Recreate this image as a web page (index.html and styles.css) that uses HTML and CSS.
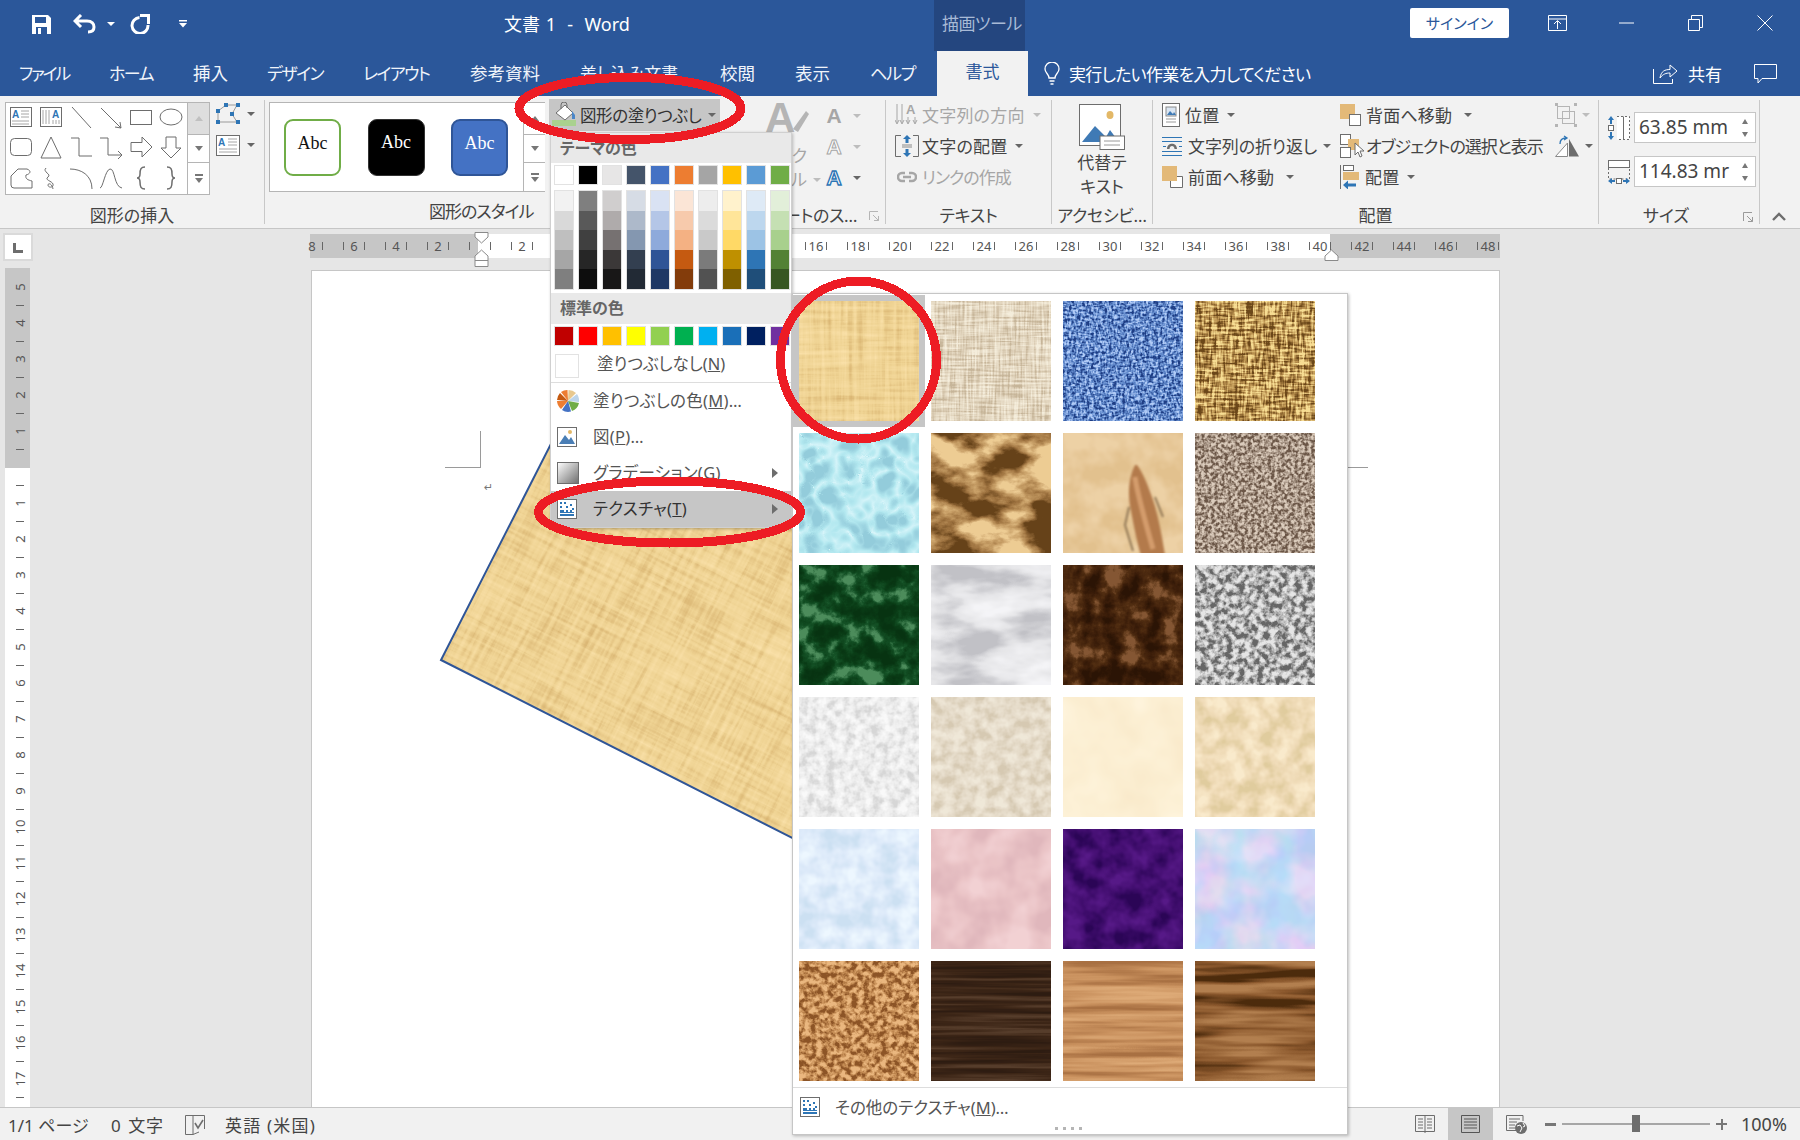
FILE: index.html
```html
<!DOCTYPE html>
<html lang="ja">
<head>
<meta charset="utf-8">
<title>文書 1 - Word</title>
<link rel="stylesheet" href="styles.css">
</head>
<body>
<svg class="defs" width="0" height="0" aria-hidden="true">
<defs>
<filter id="papyrus" x="0" y="0" width="100%" height="100%" color-interpolation-filters="sRGB"><feTurbulence type="fractalNoise" baseFrequency=".012 .22" numOctaves="3" seed="2" result="a"/><feTurbulence type="fractalNoise" baseFrequency=".22 .012" numOctaves="3" seed="5" result="b"/><feComposite in="a" in2="b" operator="arithmetic" k2=".5" k3=".5"/><feColorMatrix values="1.8 0 0 0 -.4 1.8 0 0 0 -.4 1.8 0 0 0 -.4 0 0 0 0 1"/><feComponentTransfer><feFuncR type="table" tableValues=".86 .94 .98"/><feFuncG type="table" tableValues=".72 .83 .88"/><feFuncB type="table" tableValues=".46 .58 .66"/></feComponentTransfer></filter>
<filter id="canvas" x="0" y="0" width="100%" height="100%" color-interpolation-filters="sRGB"><feTurbulence type="fractalNoise" baseFrequency=".03 .5" numOctaves="2" seed="3" result="a"/><feTurbulence type="fractalNoise" baseFrequency=".5 .03" numOctaves="2" seed="8" result="b"/><feComposite in="a" in2="b" operator="arithmetic" k2=".5" k3=".5"/><feColorMatrix values="3 0 0 0 -1 3 0 0 0 -1 3 0 0 0 -1 0 0 0 0 1"/><feComponentTransfer><feFuncR type="table" tableValues=".78 .89 .96"/><feFuncG type="table" tableValues=".71 .84 .93"/><feFuncB type="table" tableValues=".60 .75 .86"/></feComponentTransfer></filter>
<filter id="denim" x="0" y="0" width="100%" height="100%" color-interpolation-filters="sRGB"><feTurbulence type="fractalNoise" baseFrequency=".22 .45" numOctaves="2" seed="4" result="a"/><feTurbulence type="fractalNoise" baseFrequency=".45 .22" numOctaves="2" seed="9" result="b"/><feComposite in="a" in2="b" operator="arithmetic" k2=".5" k3=".5"/><feColorMatrix values="3.5 0 0 0 -1.25 3.5 0 0 0 -1.25 3.5 0 0 0 -1.25 0 0 0 0 1"/><feComponentTransfer><feFuncR type="table" tableValues=".12 .38 .70"/><feFuncG type="table" tableValues=".24 .54 .80"/><feFuncB type="table" tableValues=".52 .80 .97"/></feComponentTransfer></filter>
<filter id="weave" x="0" y="0" width="100%" height="100%" color-interpolation-filters="sRGB"><feTurbulence type="fractalNoise" baseFrequency=".06 .42" numOctaves="2" seed="6" result="a"/><feTurbulence type="fractalNoise" baseFrequency=".42 .06" numOctaves="2" seed="11" result="b"/><feComposite in="a" in2="b" operator="arithmetic" k2=".5" k3=".5"/><feColorMatrix values="4 0 0 0 -1.5 4 0 0 0 -1.5 4 0 0 0 -1.5 0 0 0 0 1"/><feComponentTransfer><feFuncR type="table" tableValues=".42 .74 .97"/><feFuncG type="table" tableValues=".28 .58 .87"/><feFuncB type="table" tableValues=".10 .32 .58"/></feComponentTransfer></filter>
<filter id="water" x="0" y="0" width="100%" height="100%" color-interpolation-filters="sRGB"><feTurbulence type="turbulence" baseFrequency=".04" numOctaves="2" seed="7"/><feColorMatrix values="2.5 0 0 0 0 2.5 0 0 0 0 2.5 0 0 0 0 0 0 0 0 1"/><feComponentTransfer><feFuncR type="table" tableValues=".84 .70 .58"/><feFuncG type="table" tableValues=".96 .91 .80"/><feFuncB type="table" tableValues=".98 .94 .86"/></feComponentTransfer></filter>
<filter id="bag" x="0" y="0" width="100%" height="100%" color-interpolation-filters="sRGB"><feTurbulence type="fractalNoise" baseFrequency=".02 .035" numOctaves="5" seed="12"/><feColorMatrix values="3.5 0 0 0 -1.25 3.5 0 0 0 -1.25 3.5 0 0 0 -1.25 0 0 0 0 1"/><feComponentTransfer><feFuncR type="table" tableValues=".40 .62 .78 .93"/><feFuncG type="table" tableValues=".26 .45 .62 .80"/><feFuncB type="table" tableValues=".10 .25 .40 .58"/></feComponentTransfer></filter>
<filter id="fossil" x="0" y="0" width="100%" height="100%" color-interpolation-filters="sRGB"><feTurbulence type="fractalNoise" baseFrequency=".04" numOctaves="3" seed="5"/><feColorMatrix values="2.5 0 0 0 -.75 2.5 0 0 0 -.75 2.5 0 0 0 -.75 0 0 0 0 1"/><feComponentTransfer><feFuncR type="table" tableValues=".89 .93"/><feFuncG type="table" tableValues=".76 .82"/><feFuncB type="table" tableValues=".56 .65"/></feComponentTransfer></filter>
<filter id="soft" x="-10%" y="-10%" width="120%" height="120%"><feGaussianBlur stdDeviation="1.2"/></filter>
<filter id="sand" x="0" y="0" width="100%" height="100%" color-interpolation-filters="sRGB"><feTurbulence type="fractalNoise" baseFrequency=".3" numOctaves="2" seed="14"/><feColorMatrix values="3 0 0 0 -1 3 0 0 0 -1 3 0 0 0 -1 0 0 0 0 1"/><feComponentTransfer><feFuncR type="table" tableValues=".42 .66 .86"/><feFuncG type="table" tableValues=".34 .59 .80"/><feFuncB type="table" tableValues=".28 .53 .74"/></feComponentTransfer></filter>
<filter id="gmarble" x="0" y="0" width="100%" height="100%" color-interpolation-filters="sRGB"><feTurbulence type="fractalNoise" baseFrequency=".05" numOctaves="5" seed="15"/><feColorMatrix values="2.4 0 0 0 -.7 2.4 0 0 0 -.7 2.4 0 0 0 -.7 0 0 0 0 1"/><feComponentTransfer><feFuncR type="table" tableValues=".03 .04 .08 .30"/><feFuncG type="table" tableValues=".20 .24 .32 .55"/><feFuncB type="table" tableValues=".07 .09 .15 .36"/></feComponentTransfer></filter>
<filter id="wmarble" x="0" y="0" width="100%" height="100%" color-interpolation-filters="sRGB"><feTurbulence type="fractalNoise" baseFrequency=".014 .035" numOctaves="4" seed="16"/><feColorMatrix values="2.2 0 0 0 -.6 2.2 0 0 0 -.6 2.2 0 0 0 -.6 0 0 0 0 1"/><feComponentTransfer><feFuncR type="table" tableValues=".76 .90 .96"/><feFuncG type="table" tableValues=".76 .90 .96"/><feFuncB type="table" tableValues=".78 .91 .97"/></feComponentTransfer></filter>
<filter id="bmarble" x="0" y="0" width="100%" height="100%" color-interpolation-filters="sRGB"><feTurbulence type="fractalNoise" baseFrequency=".05" numOctaves="5" seed="17"/><feColorMatrix values="2.4 0 0 0 -.7 2.4 0 0 0 -.7 2.4 0 0 0 -.7 0 0 0 0 1"/><feComponentTransfer><feFuncR type="table" tableValues=".17 .24 .32 .52"/><feFuncG type="table" tableValues=".08 .12 .18 .34"/><feFuncB type="table" tableValues=".02 .04 .07 .20"/></feComponentTransfer></filter>
<filter id="granite" x="0" y="0" width="100%" height="100%" color-interpolation-filters="sRGB"><feTurbulence type="fractalNoise" baseFrequency=".16" numOctaves="3" seed="18"/><feColorMatrix values="3 0 0 0 -1 3 0 0 0 -1 3 0 0 0 -1 0 0 0 0 1"/><feComponentTransfer><feFuncR type="table" tableValues=".40 .70 .90"/><feFuncG type="table" tableValues=".40 .70 .90"/><feFuncB type="table" tableValues=".40 .70 .90"/></feComponentTransfer></filter>
<filter id="news" x="0" y="0" width="100%" height="100%" color-interpolation-filters="sRGB"><feTurbulence type="fractalNoise" baseFrequency=".11" numOctaves="3" seed="19"/><feColorMatrix values="2.2 0 0 0 -.6 2.2 0 0 0 -.6 2.2 0 0 0 -.6 0 0 0 0 1"/><feComponentTransfer><feFuncR type="table" tableValues=".84 .93 .98"/><feFuncG type="table" tableValues=".84 .93 .98"/><feFuncB type="table" tableValues=".84 .93 .98"/></feComponentTransfer></filter>
<filter id="recycled" x="0" y="0" width="100%" height="100%" color-interpolation-filters="sRGB"><feTurbulence type="fractalNoise" baseFrequency=".09" numOctaves="3" seed="20"/><feColorMatrix values="2 0 0 0 -.5 2 0 0 0 -.5 2 0 0 0 -.5 0 0 0 0 1"/><feComponentTransfer><feFuncR type="table" tableValues=".84 .90 .94"/><feFuncG type="table" tableValues=".79 .86 .91"/><feFuncB type="table" tableValues=".70 .79 .85"/></feComponentTransfer></filter>
<filter id="parchment" x="0" y="0" width="100%" height="100%" color-interpolation-filters="sRGB"><feTurbulence type="fractalNoise" baseFrequency=".02" numOctaves="3" seed="21"/><feColorMatrix values="2 0 0 0 -.5 2 0 0 0 -.5 2 0 0 0 -.5 0 0 0 0 1"/><feComponentTransfer><feFuncR type="table" tableValues=".98 .99 1"/><feFuncG type="table" tableValues=".92 .94 .96"/><feFuncB type="table" tableValues=".80 .83 .87"/></feComponentTransfer></filter>
<filter id="stationery" x="0" y="0" width="100%" height="100%" color-interpolation-filters="sRGB"><feTurbulence type="fractalNoise" baseFrequency=".06" numOctaves="3" seed="22"/><feColorMatrix values="2 0 0 0 -.5 2 0 0 0 -.5 2 0 0 0 -.5 0 0 0 0 1"/><feComponentTransfer><feFuncR type="table" tableValues=".88 .94 .98"/><feFuncG type="table" tableValues=".80 .86 .92"/><feFuncB type="table" tableValues=".62 .72 .80"/></feComponentTransfer></filter>
<filter id="btissue" x="0" y="0" width="100%" height="100%" color-interpolation-filters="sRGB"><feTurbulence type="fractalNoise" baseFrequency=".05" numOctaves="3" seed="23"/><feColorMatrix values="2 0 0 0 -.5 2 0 0 0 -.5 2 0 0 0 -.5 0 0 0 0 1"/><feComponentTransfer><feFuncR type="table" tableValues=".80 .87 .93"/><feFuncG type="table" tableValues=".88 .92 .97"/><feFuncB type="table" tableValues=".95 .98 1"/></feComponentTransfer></filter>
<filter id="ptissue" x="0" y="0" width="100%" height="100%" color-interpolation-filters="sRGB"><feTurbulence type="fractalNoise" baseFrequency=".03" numOctaves="3" seed="24"/><feColorMatrix values="2 0 0 0 -.5 2 0 0 0 -.5 2 0 0 0 -.5 0 0 0 0 1"/><feComponentTransfer><feFuncR type="table" tableValues=".88 .92 .95"/><feFuncG type="table" tableValues=".72 .77 .82"/><feFuncB type="table" tableValues=".74 .78 .83"/></feComponentTransfer></filter>
<filter id="purple" x="0" y="0" width="100%" height="100%" color-interpolation-filters="sRGB"><feTurbulence type="fractalNoise" baseFrequency=".05" numOctaves="3" seed="25"/><feColorMatrix values="2 0 0 0 -.5 2 0 0 0 -.5 2 0 0 0 -.5 0 0 0 0 1"/><feComponentTransfer><feFuncR type="table" tableValues=".17 .27 .34"/><feFuncG type="table" tableValues=".02 .06 .10"/><feFuncB type="table" tableValues=".34 .45 .53"/></feComponentTransfer></filter>
<filter id="bouquet" x="0" y="0" width="100%" height="100%" color-interpolation-filters="sRGB"><feTurbulence type="fractalNoise" baseFrequency=".03" numOctaves="3" seed="26"/><feColorMatrix values="2.4 0 0 0 -.7 0 2 0 0 -.5 0 0 2 0 -.5 0 0 0 0 1"/><feComponentTransfer><feFuncR type="table" tableValues=".72 .80 .89"/><feFuncG type="table" tableValues=".80 .85 .88"/><feFuncB type="table" tableValues=".94 .96 .98"/></feComponentTransfer></filter>
<filter id="cork" x="0" y="0" width="100%" height="100%" color-interpolation-filters="sRGB"><feTurbulence type="fractalNoise" baseFrequency=".17" numOctaves="3" seed="27"/><feColorMatrix values="3 0 0 0 -1 3 0 0 0 -1 3 0 0 0 -1 0 0 0 0 1"/><feComponentTransfer><feFuncR type="table" tableValues=".55 .77 .92"/><feFuncG type="table" tableValues=".33 .55 .72"/><feFuncB type="table" tableValues=".15 .33 .50"/></feComponentTransfer></filter>
<filter id="walnut" x="0" y="0" width="100%" height="100%" color-interpolation-filters="sRGB"><feTurbulence type="fractalNoise" baseFrequency=".006 .2" numOctaves="3" seed="28"/><feColorMatrix values="2 0 0 0 -.5 2 0 0 0 -.5 2 0 0 0 -.5 0 0 0 0 1"/><feComponentTransfer><feFuncR type="table" tableValues=".18 .24 .34"/><feFuncG type="table" tableValues=".11 .15 .24"/><feFuncB type="table" tableValues=".07 .09 .17"/></feComponentTransfer></filter>
<filter id="oak" x="0" y="0" width="100%" height="100%" color-interpolation-filters="sRGB"><feTurbulence type="fractalNoise" baseFrequency=".006 .13" numOctaves="3" seed="29"/><feColorMatrix values="2 0 0 0 -.5 2 0 0 0 -.5 2 0 0 0 -.5 0 0 0 0 1"/><feComponentTransfer><feFuncR type="table" tableValues=".66 .79 .87"/><feFuncG type="table" tableValues=".44 .57 .67"/><feFuncB type="table" tableValues=".26 .37 .47"/></feComponentTransfer></filter>
<filter id="mwood" x="0" y="0" width="100%" height="100%" color-interpolation-filters="sRGB"><feTurbulence type="fractalNoise" baseFrequency=".006 .09" numOctaves="3" seed="30"/><feColorMatrix values="2.6 0 0 0 -.8 2.6 0 0 0 -.8 2.6 0 0 0 -.8 0 0 0 0 1"/><feComponentTransfer><feFuncR type="table" tableValues=".30 .55 .70"/><feFuncG type="table" tableValues=".17 .35 .50"/><feFuncB type="table" tableValues=".05 .18 .31"/></feComponentTransfer></filter>
<clipPath id="shapeclip"><polygon points="441,660 1000,943 1200,550 641,267"/></clipPath>
</defs>
</svg>

<div class="app">
  <header class="titlebar">
    <svg class="qat-save" width="19" height="19" viewBox="0 0 19 19"><path d="M0 0H16L19 3V19H0Z" fill="#fff"/><rect x="3" y="2" width="11" height="6" fill="#2b579a"/><rect x="4" y="12" width="11" height="7" fill="#2b579a"/><rect x="6" y="13" width="3" height="6" fill="#fff"/></svg>
    <svg class="qat-undo" width="23" height="20" viewBox="0 0 23 20"><path d="M8 1L2 7L8 13M2 7H14C19 7 21 10 21 13C21 16 19 18 15 18" fill="none" stroke="#fff" stroke-width="3"/></svg>
    <i class="caret caret-white qat-undo-caret"></i>
    <svg class="qat-redo" width="21" height="20" viewBox="0 0 21 20"><path d="M9.5 3.5A8 8 0 1 0 18 11" fill="none" stroke="#fff" stroke-width="3"/><path d="M10 1.5H18.5V10" fill="none" stroke="#fff" stroke-width="3"/></svg>
    <svg class="qat-more" width="8" height="8" viewBox="0 0 8 8"><path d="M0 0H8V1.5H0ZM0 3H8L4 7.5Z" fill="#fff"/></svg>
    <div class="doc-title">文書 1  -  Word</div>
    <div class="ctx-title">描画ツール</div>
    <div class="signin">サインイン</div>
    <svg class="win-display" width="19" height="16" viewBox="0 0 19 16"><path d="M.5.5H18.5V15.5H.5ZM.5 4H18.5M9.5 14V6M6 9L9.5 5.5L13 9" fill="none" stroke="#fff"/></svg>
    <svg class="win-min" width="15" height="2" viewBox="0 0 15 2"><path d="M0 1H15" stroke="#fff"/></svg>
    <svg class="win-restore" width="15" height="16" viewBox="0 0 15 16"><path d="M.5 4.5H11.5V15.5H.5ZM3.5 4.5V.5H14.5V12.5H11.5" fill="none" stroke="#fff"/></svg>
    <svg class="win-close" width="16" height="16" viewBox="0 0 16 16"><path d="M.5.5L15.5 15.5M15.5.5L.5 15.5" stroke="#fff"/></svg>
  </header>

  <nav class="tabbar">
    <div class="tablist">
      <span class="tab t-file">ファイル</span><span class="tab t-home">ホーム</span><span class="tab t-ins">挿入</span><span class="tab t-des">デザイン</span><span class="tab t-lay">レイアウト</span><span class="tab t-ref">参考資料</span><span class="tab t-mail">差し込み文書</span><span class="tab t-rev">校閲</span><span class="tab t-view">表示</span><span class="tab t-help">ヘルプ</span>
    </div>
    <span class="tab-active">書式</span>
    <svg class="bulb" width="16" height="23" viewBox="0 0 16 23"><path d="M5 16C5 12 1 11 1 7A7 7 0 0 1 15 7C15 11 11 12 11 16ZM5.5 19H10.5M6.5 22H9.5" fill="none" stroke="#fff" stroke-width="1.3"/></svg>
    <span class="tell">実行したい作業を入力してください</span>
    <svg class="share-ic" width="25" height="21" viewBox="0 0 25 21"><path d="M.5 6V20.5H19.5V16M7 15C8 8 12 6.5 17 6.5V2L24 8L17 14V10C13 10 10 11 7 15Z" fill="none" stroke="#fff"/></svg>
    <span class="share">共有</span>
    <svg class="comment" width="23" height="20" viewBox="0 0 23 20"><path d="M.5.5H22.5V14.5H8L4 19V14.5H.5Z" fill="none" stroke="#fff"/></svg>
  </nav>

  <section class="ribbon">
    <!-- 図形の挿入 -->
    <div class="group g-insert">
      <div class="group-body insert-body">
        <div class="gallery shapes">
          <div class="shape-grid">
            <svg class="sh" viewBox="0 0 24 24"><rect x="1.5" y="2.5" width="21" height="19" fill="#fff" stroke="#6d6d6d"/><text x="3" y="13" class="ia">A</text><path d="M12 6h8M12 9h8M12 12h8M3 16h17M3 19h17" stroke="#a6a6a6"/></svg>
            <svg class="sh" viewBox="0 0 24 24"><rect x="1.5" y="2.5" width="21" height="19" fill="#fff" stroke="#6d6d6d"/><text x="13" y="13" class="ia">A</text><path d="M4 5v14M7 5v14M10 5v14M14 15v4M17 15v4M20 15v4" stroke="#a6a6a6"/></svg>
            <svg class="sh" viewBox="0 0 24 24"><path d="M3 2L22 23" class="st"/></svg>
            <svg class="sh" viewBox="0 0 24 24"><path d="M2 3L22 23M22 23l-6-1M22 23l-1-6" class="st"/></svg>
            <svg class="sh" viewBox="0 0 24 24"><rect x="1.5" y="5.5" width="21" height="14" class="st"/></svg>
            <svg class="sh" viewBox="0 0 24 24"><ellipse cx="12" cy="12" rx="11" ry="8" class="st"/></svg>
            <svg class="sh" viewBox="0 0 24 24"><rect x="1.5" y="3.5" width="21" height="17" rx="4" class="st"/></svg>
            <svg class="sh" viewBox="0 0 24 24"><path d="M12 2L22 23H2Z" class="st"/></svg>
            <svg class="sh" viewBox="0 0 24 24"><path d="M2 3H10V21H23" class="st"/></svg>
            <svg class="sh" viewBox="0 0 24 24"><path d="M1 3H9V20H23M19 16l4 4-4 4" class="st"/></svg>
            <svg class="sh" viewBox="0 0 24 24"><path d="M2 7.5H13V2L23 12L13 22V16.5H2Z" class="st"/></svg>
            <svg class="sh" viewBox="0 0 24 24"><path d="M7 2H17V13H22L12 23L2 13H7Z" class="st"/></svg>
            <svg class="sh" viewBox="0 0 24 24"><path d="M2 10L9 3H18C23 5 21 8 17 9C16 13 19 14 23 15V22H5Q2 22 2 19Z" class="st"/></svg>
            <svg class="sh" viewBox="0 0 24 24"><path d="M7 2C3 6 13 8 9 11C5 14 13 15 14 18C15 22 9 22 9 19C9 17 13 17 14 23" class="st"/></svg>
            <svg class="sh" viewBox="0 0 24 24"><path d="M1 3C12 3 23 9 23 23" class="st"/></svg>
            <svg class="sh" viewBox="0 0 24 24"><path d="M1 22C4 22 6 4 11 3C16 2 15 21 23 22" class="st"/></svg>
            <svg class="sh" viewBox="0 0 24 24"><path d="M16 1C12 1 11 3 11 8C11 11 10 12 8 12C10 12 11 13 11 16C11 21 12 23 16 23" class="st st2"/></svg>
            <svg class="sh" viewBox="0 0 24 24"><path d="M8 1C12 1 13 3 13 8C13 11 14 12 16 12C14 12 13 13 13 16C13 21 12 23 8 23" class="st st2"/></svg>
          </div>
          <div class="gal-scroll">
            <div class="gal-btn gal-up-off"><i class="tri-up"></i></div>
            <div class="gal-btn gal-mid"><i class="tri-down"></i></div>
            <div class="gal-btn gal-low"><i class="more-bar"></i><i class="tri-down"></i></div>
          </div>
        </div>
        <div class="insert-side">
          <div class="side-row">
            <svg width="24" height="22" viewBox="0 0 24 22"><path d="M2 8L10 2H21L16 11L21 19H2Z" fill="none" stroke="#9a9a9a"/><g fill="#2e75b5"><rect y="6" width="4" height="4"/><rect x="8" width="4" height="4"/><rect x="20" width="4" height="4"/><rect x="14" y="9" width="4" height="4"/><rect x="20" y="17" width="4" height="4"/><rect y="17" width="4" height="4"/></g></svg>
            <i class="caret"></i>
          </div>
          <div class="side-row">
            <svg width="24" height="21" viewBox="0 0 24 21"><rect x=".5" y=".5" width="23" height="20" fill="#fff" stroke="#6d6d6d"/><text x="2" y="11" class="ia">A</text><path d="M12 4h9M12 7h9M12 10h9M3 14h18M3 17h18" stroke="#a6a6a6"/></svg>
            <i class="caret"></i>
          </div>
        </div>
      </div>
      <div class="group-label">図形の挿入</div>
    </div>

    <!-- 図形のスタイル -->
    <div class="group g-style">
      <div class="group-body style-body">
        <div class="style-col">
          <div class="gallery styles">
            <div class="abc-row">
              <div class="abc abc-a">Abc</div>
              <div class="abc abc-b">Abc</div>
              <div class="abc abc-c">Abc</div>
            </div>
            <div class="gal-scroll">
              <div class="gal-btn gal-up"><i class="tri-up"></i></div>
              <div class="gal-btn gal-mid"><i class="tri-down"></i></div>
              <div class="gal-btn gal-low"><i class="more-bar"></i><i class="tri-down"></i></div>
            </div>
          </div>
          <div class="group-label label-style">図形のスタイル</div>
        </div>
        <div class="fill-btn">
          <svg class="bucket" width="25" height="26" viewBox="0 0 25 26"><rect y="18" width="24" height="6" fill="#a9d18e"/><path d="M4 11L13 3L21 11L13 18Z" fill="#fff" stroke="#6d6d6d"/><path d="M9 7V3A3 3 0 0 1 15 3V6" fill="none" stroke="#6d6d6d"/><path d="M20 9L23 13V17H20Z" fill="#4a86c8"/></svg>
          <span>図形の塗りつぶし</span>
          <i class="caret"></i>
        </div>
      </div>
    </div>

    <!-- ワードアート -->
    <div class="group g-wordart">
      <div class="group-body wa-body">
        <div class="wa-big">
          <svg class="wa-bigic" width="44" height="36" viewBox="0 0 44 36"><text x="0" y="31" class="wa-bigA">A</text><path d="M28 28L41 10L44 13L33 31Z" fill="#b5b5b5"/></svg>
          <div class="wa-label off">クイック</div>
          <div class="wa-label off">スタイル<i class="caret caret-off wa-caret"></i></div>
        </div>
        <div class="wa-col">
          <div class="wa-row"><span class="wa-a wa-fill">A</span><i class="caret caret-off"></i></div>
          <div class="wa-row"><span class="wa-a wa-line">A</span><i class="caret caret-off"></i></div>
          <div class="wa-row"><span class="wa-a wa-fx">A</span><i class="caret"></i></div>
        </div>
      </div>
      <div class="group-label label-wa">ワードアートのス…<svg class="launch" width="10" height="10" viewBox="0 0 10 10"><path d="M.5 9V.5H9M4 4L9.5 9.5M9.5 5V9.5H5" fill="none" stroke="#b5b5b5"/></svg></div>
    </div>

    <!-- テキスト -->
    <div class="group g-text">
      <div class="group-body">
        <div class="rrow">
          <svg width="24" height="24" viewBox="0 0 24 24"><path d="M2 1V20M0 17L2 21L4 17M7 1V20M5 17L7 21L9 17M13 14V20M11 17L13 21L15 17M20 14V20M18 17L20 21L22 17" fill="none" stroke="#a6a6a6"/><text x="11" y="11" class="ia-off">A</text></svg>
          <span class="rtxt off">文字列の方向</span><i class="caret caret-off cr10"></i>
        </div>
        <div class="rrow">
          <svg width="24" height="24" viewBox="0 0 24 24"><path d="M6 1.5H.5V22.5H6M18 1.5H23.5V22.5H18" fill="none" stroke="#6d6d6d"/><path d="M7 11H17M7 13H17" stroke="#8a8a8a"/><path d="M12 1L8 5H10.5V9H13.5V5H16ZM12 23L8 19H10.5V15H13.5V19H16Z" fill="#2e75b5"/></svg>
          <span class="rtxt">文字の配置</span><i class="caret cr10"></i>
        </div>
        <div class="rrow rrow-link">
          <svg width="20" height="12" viewBox="0 0 20 12"><path d="M8 2H5A4 4 0 0 0 5 10H8M12 2H15A4 4 0 0 1 15 10H12M6 6H14" fill="none" stroke="#a6a6a6" stroke-width="2.5"/></svg>
          <span class="rtxt off">リンクの作成</span>
        </div>
      </div>
      <div class="group-label label-textg">テキスト</div>
    </div>

    <!-- アクセシビリティ -->
    <div class="group g-acc">
      <div class="group-body acc-body">
        <svg class="acc-ic" width="46" height="46" viewBox="0 0 46 46"><rect x=".5" y=".5" width="41" height="41" fill="#fff" stroke="#6d6d6d"/><ellipse cx="31" cy="11" rx="3.5" ry="4" fill="#e3b867"/><path d="M3 38L16 22L27 33L31 26L40 38Z" fill="#3f7ab5"/><rect x="21" y="32" width="24.5" height="13.5" fill="#fff" stroke="#6d6d6d"/><path d="M25 37H41M25 41H41" stroke="#9a9a9a"/></svg>
        <div class="acc-txt">代替テ<br>キスト</div>
      </div>
      <div class="group-label label-textg">アクセシビ…</div>
    </div>

    <!-- 配置 -->
    <div class="group g-arrange">
      <div class="group-body arrange-body">
        <div class="acol acol1">
          <div class="rrow">
            <svg width="18" height="24" viewBox="0 0 18 24"><rect x=".5" y=".5" width="17" height="23" fill="#fff" stroke="#6d6d6d"/><rect x="4" y="4" width="10" height="9" fill="#dbe6f2" stroke="#8a8a8a"/><path d="M5 12L8 8L11 11L12 9L14 12Z" fill="#3f7ab5"/><path d="M4 16H14M4 19H14" stroke="#9a9a9a"/></svg>
            <span class="rtxt">位置</span><i class="caret cr10"></i>
          </div>
          <div class="rrow">
            <svg width="21" height="22" viewBox="0 0 21 22"><path d="M0 2.5H20M0 6.5H20M0 16.5H20M0 20.5H20" stroke="#2e75b5"/><path d="M1 11.5H4M17 11.5H20" stroke="#2e75b5"/><path d="M5 14C5 7 15 7 15 14H12.5C12.5 10 7.5 10 7.5 14Z" fill="#6d6d6d"/></svg>
            <span class="rtxt rtxt-wrap">文字列の折り返し</span><i class="caret cr6"></i>
          </div>
          <div class="rrow">
            <svg width="21" height="22" viewBox="0 0 21 22"><path d="M11.5 10.5H20.5V21.5H8.5V15" fill="#fff" stroke="#6d6d6d"/><rect x="0" y="0" width="15" height="15" fill="#e3b978"/></svg>
            <span class="rtxt">前面へ移動</span><i class="caret cr14"></i>
          </div>
        </div>
        <div class="acol acol2">
          <div class="rrow">
            <svg width="21" height="22" viewBox="0 0 21 22"><rect width="15" height="15" fill="#e3b978"/><rect x="9.5" y="10.5" width="11" height="11" fill="#fff" stroke="#6d6d6d"/></svg>
            <span class="rtxt">背面へ移動</span><i class="caret cr14"></i>
          </div>
          <div class="rrow">
            <svg width="24" height="24" viewBox="0 0 24 24"><rect x=".5" y=".5" width="10" height="10" fill="#fff" stroke="#6d6d6d"/><rect x="8" y="5" width="11" height="11" fill="#e3b978"/><rect x=".5" y="13.5" width="10" height="10" fill="#fff" stroke="#6d6d6d"/><path d="M15 9V21L18 18L20 23L22 22L20 17H24Z" fill="#fff" stroke="#6d6d6d"/></svg>
            <span class="rtxt rtxt-obj">オブジェクトの選択と表示</span>
          </div>
          <div class="rrow">
            <svg width="20" height="24" viewBox="0 0 20 24"><path d="M.5 0V24" stroke="#6d6d6d"/><rect x="3.5" y=".5" width="10" height="5" fill="#fff" stroke="#6d6d6d"/><rect x="3" y="7" width="16" height="8" fill="#e3b978"/><path d="M3 20L8 15.5V18.5H16V21.5H8V24.5Z" fill="#2e75b5"/></svg>
            <span class="rtxt">配置</span><i class="caret cr10"></i>
          </div>
        </div>
        <div class="acol acol3">
          <div class="rrow">
            <svg width="22" height="24" viewBox="0 0 22 24"><g fill="none" stroke="#b5b5b5"><rect x="2.5" y="3.5" width="12" height="12"/><rect x="7.5" y="8.5" width="12" height="12"/></g><g fill="#b5b5b5"><rect width="3" height="3"/><rect x="19" width="3" height="3"/><rect y="21" width="3" height="3"/><rect x="19" y="21" width="3" height="3"/></g></svg>
            <i class="caret caret-off cr3"></i>
          </div>
          <div class="rrow">
            <svg width="25" height="22" viewBox="0 0 25 22"><path d="M.5 21.5L12.5 8V21.5Z" fill="#fff" stroke="#8a8a8a"/><path d="M14 4L24 21.5H14Z" fill="#6d6d6d"/><path d="M5 9C5 5 7 3 11 3M9 1L12 3L9 5" fill="none" stroke="#2e75b5" stroke-width="1.3"/></svg>
            <i class="caret cr3"></i>
          </div>
        </div>
      </div>
      <div class="group-label">配置</div>
    </div>

    <!-- サイズ -->
    <div class="group g-size">
      <div class="group-body size-body">
        <div class="size-row">
          <svg width="22" height="24" viewBox="0 0 22 24"><path d="M3 0L6 4H4V8H2V4H0ZM3 24L6 20H4V16H2V20H0Z" fill="#2e75b5"/><rect x=".5" y="9.5" width="5" height="5" fill="#fff" stroke="#6d6d6d"/><path d="M9 .5H21.5V23.5H9" fill="#fff" stroke="#6d6d6d" stroke-dasharray="2 2"/><path d="M15.5.5V23.5" stroke="#6d6d6d"/></svg>
          <div class="spin">63.85 mm<span class="spin-arrows"><i class="tri-up"></i><i class="tri-down"></i></span></div>
        </div>
        <div class="size-row">
          <svg width="22" height="24" viewBox="0 0 22 24"><rect x=".5" y=".5" width="21" height="7" fill="#fff" stroke="#6d6d6d"/><path d="M.5 8V19H21.5V8" fill="none" stroke="#6d6d6d" stroke-dasharray="2 2"/><path d="M0 21L4 18V20H7V22H4V24ZM22 21L18 18V20H15V22H18V24Z" fill="#2e75b5"/><rect x="8.5" y="18.5" width="5" height="5" fill="#fff" stroke="#6d6d6d"/></svg>
          <div class="spin">114.83 mr<span class="spin-arrows"><i class="tri-up"></i><i class="tri-down"></i></span></div>
        </div>
      </div>
      <div class="group-label label-size">サイズ<svg class="launch launch-size" width="10" height="10" viewBox="0 0 10 10"><path d="M.5 9V.5H9M4 4L9.5 9.5M9.5 5V9.5H5" fill="none" stroke="#9a9a9a"/></svg></div>
    </div>
    <div class="collapse">
      <svg width="14" height="9" viewBox="0 0 14 9"><path d="M1 8L7 2L13 8" fill="none" stroke="#6d6d6d" stroke-width="2.4"/></svg>
    </div>
  </section>

  <main class="workspace">
    <div class="ruler-corner"><div class="corner-btn"><svg width="10" height="10" viewBox="0 0 10 10"><path d="M0 0H3V7H10V10H0Z" fill="#6d6d6d"/></svg></div></div>
    <div class="hruler-wrap">
      <div class="hruler">
        <span class="hs hs-first"><b>8</b></span><span class="hs"><b>6</b></span><span class="hs"><b>4</b></span><span class="hs"><b>2</b></span><span class="hs"><b></b></span><span class="hs"><b>2</b></span><span class="hs"><b>4</b></span><span class="hs"><b>6</b></span><span class="hs"><b>8</b></span><span class="hs"><b>10</b></span><span class="hs"><b>12</b></span><span class="hs"><b>14</b></span><span class="hs"><b>16</b></span><span class="hs"><b>18</b></span><span class="hs"><b>20</b></span><span class="hs"><b>22</b></span><span class="hs"><b>24</b></span><span class="hs"><b>26</b></span><span class="hs"><b>28</b></span><span class="hs"><b>30</b></span><span class="hs"><b>32</b></span><span class="hs"><b>34</b></span><span class="hs"><b>36</b></span><span class="hs"><b>38</b></span><span class="hs"><b>40</b></span><span class="hs"><b>42</b></span><span class="hs"><b>44</b></span><span class="hs"><b>46</b></span><span class="hs"><b>48</b></span>
      </div>
      <svg class="marker marker-left" width="15" height="36" viewBox="0 0 15 36"><path d="M1 .5H14V5L7.5 11L1 5Z" fill="#fff" stroke="#8a8a8a"/><path d="M7.5 18L14 24V34.5H1V24ZM1 28.5H14" fill="#fff" stroke="#8a8a8a"/></svg>
      <svg class="marker marker-right" width="15" height="12" viewBox="0 0 15 12"><path d="M7.5 1L14 7V11.5H1V7Z" fill="#fff" stroke="#8a8a8a"/></svg>
    </div>
    <div class="vruler">
      <b class="vn">5</b><i class="vt"></i><b class="vn">4</b><i class="vt"></i><b class="vn">3</b><i class="vt"></i><b class="vn">2</b><i class="vt"></i><b class="vn">1</b><i class="vt"></i><i class="vt vt-none"></i><i class="vt"></i><b class="vn">1</b><i class="vt"></i><b class="vn">2</b><i class="vt"></i><b class="vn">3</b><i class="vt"></i><b class="vn">4</b><i class="vt"></i><b class="vn">5</b><i class="vt"></i><b class="vn">6</b><i class="vt"></i><b class="vn">7</b><i class="vt"></i><b class="vn">8</b><i class="vt"></i><b class="vn">9</b><i class="vt"></i><b class="vn">10</b><i class="vt"></i><b class="vn">11</b><i class="vt"></i><b class="vn">12</b><i class="vt"></i><b class="vn">13</b><i class="vt"></i><b class="vn">14</b><i class="vt"></i><b class="vn">15</b><i class="vt"></i><b class="vn">16</b><i class="vt"></i><b class="vn">17</b><i class="vt"></i>
    </div>
    <div class="canvas">
      <div class="page">
        <i class="crop crop-tl"></i>
        <i class="crop crop-tr"></i>
        <span class="retmark">↵</span>
        <svg class="shape" width="1000" height="700" viewBox="412 420 1000 700">
          <g clip-path="url(#shapeclip)"><rect x="300" y="200" width="1100" height="900" fill="#e5c88a" filter="url(#papyrus)" transform="rotate(27 720 600)"/></g>
          <polygon points="441,660 1000,943 1200,550 641,267" fill="none" stroke="#2f5597" stroke-width="2"/>
        </svg>
      </div>
    </div>
  </main>

  <footer class="statusbar">
    <span class="st-a">1/1 ページ</span>
    <span class="st-b">0 文字</span>
    <svg class="st-proof" width="20" height="21" viewBox="0 0 20 21"><path d="M.5 1.5H8V20.5H.5ZM8 1.5H19.5V15M8 20.5L14 18" fill="none" stroke="#6d6d6d"/><path d="M10 9L13 14L18 6" fill="none" stroke="#6d6d6d" stroke-width="1.6"/></svg>
    <span class="st-c">英語 (米国)</span>
    <div class="st-right">
      <svg class="st-read" width="20" height="18" viewBox="0 0 20 18"><path d="M.5.5H19.5V16.5H.5ZM10 .5V18M3 4H8M3 7H8M3 10H8M3 13H8M12 4H17M12 7H17M12 10H17M12 13H17" fill="none" stroke="#6d6d6d"/></svg>
      <div class="st-view"><svg width="19" height="18" viewBox="0 0 19 18"><path d="M.5.5H18.5V17.5H.5ZM3 4H16M3 7H16M3 10H16M3 13H16" fill="none" stroke="#555"/></svg></div>
      <svg class="st-web" width="21" height="19" viewBox="0 0 21 19"><path d="M11 15.5H.5V.5H17V6M3 4H14M3 7H11M3 10H9M3 13H9" fill="none" stroke="#6d6d6d"/><circle cx="15" cy="13" r="6" fill="#6d6d6d"/><path d="M11 11L14 10L16 13L14 17M17 8L19 11L17 12" fill="none" stroke="#fff"/></svg>
      <i class="z-minus"></i>
      <div class="z-track"><i class="z-thumb"></i></div>
      <i class="z-plus"></i>
      <span class="z-pct">100%</span>
    </div>
  </footer>

  <!-- 塗りつぶしメニュー -->
  <div class="fillmenu">
    <div class="mhead">テーマの色</div>
    <div class="swatches sw-theme"><i class="t1"></i><i class="t2"></i><i class="t3"></i><i class="t4"></i><i class="t5"></i><i class="t6"></i><i class="t7"></i><i class="t8"></i><i class="t9"></i><i class="t10"></i></div>
    <div class="swatches sw-grad"><i class="g1"></i><i class="g2"></i><i class="g3"></i><i class="g4"></i><i class="g5"></i><i class="g6"></i><i class="g7"></i><i class="g8"></i><i class="g9"></i><i class="g10"></i></div>
    <div class="mhead mhead2">標準の色</div>
    <div class="swatches sw-std"><i class="s1"></i><i class="s2"></i><i class="s3"></i><i class="s4"></i><i class="s5"></i><i class="s6"></i><i class="s7"></i><i class="s8"></i><i class="s9"></i><i class="s10"></i></div>
    <div class="nofill"><i class="nofill-box"></i><span>塗りつぶしなし(<u>N</u>)</span></div>
    <div class="mitem">
      <svg class="mic" width="22" height="22" viewBox="0 0 22 22"><path d="M11 11L4 2A11 11 0 0 1 10.5 0Z" fill="#ed7d31"/><path d="M11 11L11.5 0A11 11 0 0 1 19 3Z" fill="#e8c88e"/><path d="M11 11L20 4A11 11 0 0 1 22 12Z" fill="#bcd4ea"/><path d="M11 11L22 13A11 11 0 0 1 15 21Z" fill="#70ad47"/><path d="M11 11L14 21.5A11 11 0 0 1 5 20Z" fill="#4472c4"/><path d="M11 11L4 19A11 11 0 0 1 0 11Z" fill="#ed7d31"/><path d="M11 11L0 10A11 11 0 0 1 3 3Z" fill="#c55a11"/></svg>
      <span>塗りつぶしの色(<u>M</u>)…</span>
    </div>
    <div class="mitem">
      <svg class="mic mic20" width="20" height="20" viewBox="0 0 20 20"><rect x=".5" y=".5" width="19" height="19" fill="#fff" stroke="#6d6d6d"/><circle cx="13" cy="5" r="2" fill="#e3b867"/><path d="M2 17L8 8L12 13L14 10L18 17Z" fill="#4a7eb5"/></svg>
      <span>図(<u>P</u>)…</span>
    </div>
    <div class="mitem mitem-grad">
      <svg class="mic" width="22" height="22" viewBox="0 0 22 22"><defs><linearGradient id="gr" x1="0" y1="0" x2="1" y2="1"><stop offset="0" stop-color="#fff"/><stop offset="1" stop-color="#6d6d6d"/></linearGradient></defs><rect x=".5" y=".5" width="21" height="21" fill="url(#gr)" stroke="#6d6d6d"/></svg>
      <span>グラデーション(<u>G</u>)</span>
      <i class="arrow-r"></i>
    </div>
    <div class="mitem mitem-active">
      <svg class="mic mic20" width="20" height="20" viewBox="0 0 20 20"><rect x=".5" y=".5" width="19" height="19" fill="#fff" stroke="#6d6d6d"/><path d="M3 3h2v2h-2zM7 3h2v2h-2zM13 5h2v2h-2zM3 7h2v2h-2zM9 7h2v2h-2zM15 9h2v2h-2zM3 11h4v2h-4zM9 11h2v2h-2zM13 11h2v2h-2zM3 15h14v2h-14zM3 13h14v1h-14z" fill="#2e75b5"/></svg>
      <span>テクスチャ(<u>T</u>)</span>
      <i class="arrow-r"></i>
    </div>
  </div>

  <!-- テクスチャ一覧 -->
  <div class="texmenu">
    <div class="texgrid">
      <svg class="tex tex-sel" viewBox="0 0 120 120"><rect width="120" height="120" filter="url(#papyrus)"/></svg>
      <svg class="tex" viewBox="0 0 120 120"><rect width="120" height="120" filter="url(#canvas)"/></svg>
      <svg class="tex" viewBox="0 0 120 120"><rect width="120" height="120" filter="url(#denim)"/></svg>
      <svg class="tex" viewBox="0 0 120 120"><rect width="120" height="120" filter="url(#weave)"/></svg>
      <svg class="tex" viewBox="0 0 120 120"><rect width="120" height="120" filter="url(#water)"/></svg>
      <svg class="tex" viewBox="0 0 120 120"><rect width="120" height="120" filter="url(#bag)"/></svg>
      <svg class="tex" viewBox="0 0 120 120"><rect width="120" height="120" filter="url(#fossil)"/><g filter="url(#soft)"><path d="M72 32C66 44 64 60 68 78C71 94 74 110 78 122H102C99 104 96 86 91 70C86 54 79 38 74 32Z" fill="#b37a4c"/><path d="M72 44C74 60 82 88 90 116" fill="none" stroke="#d49c6c" stroke-width="5"/><path d="M66 74L62 92L70 118M92 64L100 84" fill="none" stroke="#8f7654" stroke-width="2"/></g></svg>
      <svg class="tex" viewBox="0 0 120 120"><rect width="120" height="120" filter="url(#sand)"/></svg>
      <svg class="tex" viewBox="0 0 120 120"><rect width="120" height="120" filter="url(#gmarble)"/></svg>
      <svg class="tex" viewBox="0 0 120 120"><rect width="120" height="120" filter="url(#wmarble)"/></svg>
      <svg class="tex" viewBox="0 0 120 120"><rect width="120" height="120" filter="url(#bmarble)"/></svg>
      <svg class="tex" viewBox="0 0 120 120"><rect width="120" height="120" filter="url(#granite)"/></svg>
      <svg class="tex" viewBox="0 0 120 120"><rect width="120" height="120" filter="url(#news)"/></svg>
      <svg class="tex" viewBox="0 0 120 120"><rect width="120" height="120" filter="url(#recycled)"/></svg>
      <svg class="tex" viewBox="0 0 120 120"><rect width="120" height="120" filter="url(#parchment)"/></svg>
      <svg class="tex" viewBox="0 0 120 120"><rect width="120" height="120" filter="url(#stationery)"/></svg>
      <svg class="tex" viewBox="0 0 120 120"><rect width="120" height="120" filter="url(#btissue)"/></svg>
      <svg class="tex" viewBox="0 0 120 120"><rect width="120" height="120" filter="url(#ptissue)"/></svg>
      <svg class="tex" viewBox="0 0 120 120"><rect width="120" height="120" filter="url(#purple)"/></svg>
      <svg class="tex" viewBox="0 0 120 120"><rect width="120" height="120" filter="url(#bouquet)"/></svg>
      <svg class="tex" viewBox="0 0 120 120"><rect width="120" height="120" filter="url(#cork)"/></svg>
      <svg class="tex" viewBox="0 0 120 120"><rect width="120" height="120" filter="url(#walnut)"/></svg>
      <svg class="tex" viewBox="0 0 120 120"><rect width="120" height="120" filter="url(#oak)"/></svg>
      <svg class="tex" viewBox="0 0 120 120"><rect width="120" height="120" filter="url(#mwood)"/></svg>
    </div>
    <div class="texmore">
      <svg width="20" height="20" viewBox="0 0 20 20"><rect x=".5" y=".5" width="19" height="19" fill="#fff" stroke="#6d6d6d"/><path d="M3 3h2v2h-2zM7 3h2v2h-2zM13 5h2v2h-2zM3 7h2v2h-2zM9 7h2v2h-2zM15 9h2v2h-2zM3 11h4v2h-4zM9 11h2v2h-2zM13 11h2v2h-2zM3 15h14v2h-14zM3 13h14v1h-14z" fill="#2e75b5"/></svg>
      <span>その他のテクスチャ(<u>M</u>)…</span>
    </div>
    <div class="grip"><i></i><i></i><i></i><i></i></div>
  </div>

  <!-- 赤い丸 -->
  <svg class="annot" width="1800" height="1140" viewBox="0 0 1800 1140" aria-hidden="true">
    <ellipse cx="630" cy="108.5" rx="111" ry="31"/>
    <ellipse cx="858.5" cy="360" rx="78" ry="79"/>
    <ellipse cx="669.5" cy="512" rx="131" ry="31"/>
  </svg>
</div>
</body>
</html>
```

FILE: styles.css
```css
* { box-sizing: border-box; }
html, body { margin: 0; padding: 0; }
body {
  font-family: "Noto Sans", "Noto Sans CJK JP", sans-serif;
  font-feature-settings: "palt";
  color: #444;
}
i { display: block; font-style: normal; }
.defs { position: absolute; }

.app {
  position: relative;
  width: 1800px;
  height: 1140px;
  overflow: hidden;
  display: flex;
  flex-direction: column;
  background: #e6e6e6;
}

/* title bar */
.titlebar {
  height: 51px;
  flex: none;
  background: #2b579a;
  display: flex;
  align-items: center;
  padding-bottom: 3px;
  color: #fff;
}
.titlebar svg, .titlebar i { flex: none; }
.qat-save { margin-left: 32px; }
.qat-undo { margin-left: 22px; }
.qat-undo-caret { margin-left: 11px; }
.qat-redo { margin-left: 15px; }
.qat-more { margin-left: 28px; }
.doc-title {
  margin-left: 317px;
  width: 430px;
  font-size: 18px;
  line-height: 24px;
  white-space: pre;
  word-spacing: 1px;
}
.ctx-title {
  width: 91px;
  height: 51px;
  align-self: flex-start;
  background: #24467f;
  color: #a8bad6;
  font-size: 17px;
  letter-spacing: -.5px;
  line-height: 47px;
  padding-left: 8px;
  white-space: nowrap;
}
.signin {
  margin-left: 385px;
  width: 99px;
  height: 30px;
  margin-top: -2px;
  background: #fff;
  border-radius: 2px;
  color: #2b579a;
  font-size: 15px;
  line-height: 30px;
  text-align: center;
}
.win-display { margin-left: 39px; margin-top: -3px; }
.win-min { margin-left: 52px; margin-top: -2px; }
.win-restore { margin-left: 54px; margin-top: -3px; }
.win-close { margin-left: 54px; margin-top: -3px; }

/* tabs */
.tabbar {
  height: 45px;
  flex: none;
  background: #2b579a;
  display: flex;
  align-items: center;
  color: #fff;
  font-size: 17px;
}
.tabbar svg { flex: none; }
.tablist { width: 937px; flex: none; display: flex; }
.tab { white-space: nowrap; line-height: 41px; color: #f0f4fa; flex: none; }
.t-file { margin-left: 19px; width: 90px; letter-spacing: -2.2px; }
.t-home { width: 84px; letter-spacing: -1.6px; }
.t-ins { width: 74px; font-size: 17.5px; }
.t-des { width: 96px; letter-spacing: -1.6px; }
.t-lay { width: 107px; letter-spacing: -1.6px; }
.t-ref { width: 110px; font-size: 17.5px; }
.t-mail { width: 140px; letter-spacing: -.2px; }
.t-rev { width: 75px; font-size: 17.5px; }
.t-view { width: 75px; font-size: 17.5px; }
.t-help { width: 60px; letter-spacing: -1.2px; }
.tab-active {
  width: 91px;
  flex: none;
  align-self: stretch;
  background: #f2f2f2;
  color: #2b579a;
  line-height: 42px;
  text-align: center;
}
.bulb { margin-left: 16px; }
.tell { margin-left: 9px; width: 584px; flex: none; white-space: nowrap; letter-spacing: -.75px; }
.share-ic { margin-left: 0; }
.share { margin-left: 10px; width: 35px; white-space: nowrap; }
.comment { margin-left: 31px; }

/* ribbon */
.ribbon {
  height: 133px;
  flex: none;
  background: #f2f2f2;
  border-bottom: 1px solid #c6c6c6;
  padding-top: 4px;
  display: flex;
  align-items: flex-start;
  font-size: 17px;
}
.group {
  height: 124px;
  flex: none;
  border-right: 1px solid #c8c8c8;
  display: flex;
  flex-direction: column;
}
.group-body { height: 104px; flex: none; }
.group-label {
  height: 24px;
  line-height: 24px;
  text-align: center;
  font-size: 17px;
  white-space: nowrap;
  color: #444;
}
.label-textg { letter-spacing: -.3px; }
.g-insert { width: 265px; }
.g-style { width: 455px; border-right: 0; }
.g-wordart { width: 166px; }
.g-text { width: 166px; }
.g-acc { width: 101px; }
.g-arrange { width: 446px; }
.g-size { width: 161px; }

.insert-body { display: flex; padding: 2px 0 0 5px; }
.gallery {
  display: flex;
  background: #fff;
  border: 1px solid #b5b5b5;
}
.shapes { width: 205px; height: 93px; }
.shape-grid {
  width: 182px;
  margin-top: -1px;
  display: grid;
  grid-template-columns: repeat(6, 30px);
  grid-template-rows: repeat(3, 30.3px);
  justify-items: center;
  align-items: center;
}
.sh { width: 24px; height: 24px; }
.st { fill: none; stroke: #6d6d6d; stroke-width: 1; }
.st2 { stroke-width: 1.5; }
.ia { font: bold 10px "Liberation Sans", sans-serif; fill: #2e75b5; }
.ia-off { font: bold 13px "Liberation Sans", sans-serif; fill: #a6a6a6; }
.gal-scroll {
  width: 22px;
  flex: none;
  background: #f2f2f2;
  border-left: 1px solid #b5b5b5;
  display: flex;
  flex-direction: column;
}
.gal-btn {
  flex: none;
  height: 28px;
  display: flex;
  flex-direction: column;
  align-items: center;
  justify-content: center;
  gap: 2px;
  background: #fff;
  border-bottom: 1px solid #b5b5b5;
}
.gal-up-off { height: 32px; background: #dedede; }
.gal-up { height: 32px; }
.gal-low { border-bottom: 0; flex: 1; }
.tri-up { width: 0; height: 0; border-left: 4px solid transparent; border-right: 4px solid transparent; border-bottom: 5px solid #777; }
.tri-down { width: 0; height: 0; border-left: 4px solid transparent; border-right: 4px solid transparent; border-top: 5px solid #777; }
.gal-up-off .tri-up { border-bottom-color: #c0c0c0; }
.more-bar { width: 8px; height: 2px; background: #777; }

.insert-side { margin-left: 6px; display: flex; flex-direction: column; gap: 9px; padding-top: 1px; }
.side-row { display: flex; align-items: center; gap: 7px; height: 22px; }
.caret { width: 0; height: 0; flex: none; border-left: 4px solid transparent; border-right: 4px solid transparent; border-top: 4px solid #666; }
.caret-white { border-top-color: #fff; }
.caret-off { border-top-color: #bdbdbd; }
.cr3 { margin-left: 5px; }
.cr6 { margin-left: 6px; }
.cr10 { margin-left: 8px; }
.cr14 { margin-left: 12px; }

.style-body { display: flex; height: 124px; padding-left: 4px; }
.style-col { width: 276px; flex: none; display: flex; flex-direction: column; }
.styles { margin-top: 2px; width: 276px; height: 90px; }
.abc-row { width: 253px; flex: none; display: flex; padding: 16px 0 0 14px; gap: 26.5px; }
.abc {
  width: 57px;
  height: 57px;
  border-radius: 9px;
  font: 18px/44px "Liberation Serif", serif;
  text-align: center;
}
.abc-a { background: #fff; border: 2px solid #70ad47; color: #111; }
.abc-b { background: #000; border: 1px solid #333; color: #fff; }
.abc-c { background: #4472c4; border: 2px solid #2f5597; color: #fff; }
.label-style { margin-top: 8px; padding-left: 160px; text-align: left; letter-spacing: -1px; }
.fill-btn {
  margin: -1px 0 0 4px;
  height: 32px;
  width: 171px;
  flex: none;
  background: #c6c6c6;
  display: flex;
  align-items: center;
  padding-left: 3px;
  font-size: 16.5px;
  letter-spacing: -.4px;
  color: #333;
  white-space: nowrap;
}
.fill-btn span { margin-left: 3px; }
.fill-btn .caret { margin-left: 7px; }
.bucket { flex: none; }

.wa-body { display: flex; padding-left: 36px; }
.wa-big { width: 51px; flex: none; padding-top: 1px; }
.wa-bigic { display: block; margin-left: 9px; margin-bottom: 7px; overflow: visible; }
.wa-bigA { font: bold 42px "Liberation Sans", sans-serif; fill: #b5b5b5; }
.wa-label { font-size: 17px; line-height: 24px; white-space: nowrap; display: flex; justify-content: flex-end; align-items: center; }
.wa-caret { margin-left: 6px; margin-right: -14px; }
.off { color: #a6a6a6; }
.wa-col { margin-left: 18px; }
.wa-row { height: 31px; width: 40px; display: flex; align-items: center; gap: 10px; }
.wa-a { font: bold 21px/1 "Liberation Sans", sans-serif; width: 18px; text-align: center; }
.wa-fill { color: #a6a6a6; }
.wa-line { color: #fff; -webkit-text-stroke: 1px #a6a6a6; }
.wa-fx { color: #fff; -webkit-text-stroke: 1.4px #2e75b5; }
.label-wa { padding-right: 6px; display: flex; justify-content: flex-end; align-items: center; gap: 12px; letter-spacing: -.4px; }

.rrow { height: 31px; display: flex; align-items: center; padding-left: 9px; white-space: nowrap; }
.group-body > .rrow:first-child, .acol > .rrow:first-child { margin-top: -1px; }
.rrow svg { flex: none; }
.rtxt { margin-left: 3px; letter-spacing: .2px; }
.rtxt-obj { letter-spacing: -1px; }
.rtxt-wrap { letter-spacing: -.1px; }
.rrow-link { padding-left: 11px; }
.rrow-link .rtxt { margin-left: 5px; letter-spacing: -1px; }

.acc-body { display: flex; flex-direction: column; align-items: center; padding: 4px 0 0 0; }
.acc-ic { flex: none; }
.acc-txt { font-size: 17px; line-height: 24px; text-align: center; margin-top: 1px; }

.arrange-body { display: flex; }
.acol1 { width: 179px; flex: none; }
.acol2 { width: 223px; flex: none; }
.acol1 .rtxt { margin-left: 5px; }
.acol2 .rtxt { margin-left: 5px; }
.acol2 .rrow:nth-child(2) .rtxt { margin-left: 2px; }
.acol2 .rrow { padding-left: 8px; }
.acol3 .rrow { padding-left: 0; }
.acol1 .rrow { padding-left: 9px; }

.size-body { padding: 12px 0 0 9px; display: flex; flex-direction: column; gap: 13px; }
.size-row { display: flex; align-items: center; gap: 4px; height: 31px; }
.size-row svg { flex: none; }
.spin {
  width: 122px;
  height: 31px;
  background: #fff;
  border: 1px solid #c6c6c6;
  font: 19px/29px "Noto Sans", sans-serif;
  color: #444;
  padding-left: 4px;
  display: flex;
  white-space: nowrap;
  position: relative;
  overflow: hidden;
}
.spin-arrows {
  position: absolute;
  right: 0;
  top: 0;
  width: 20px;
  height: 29px;
  background: #fff;
  display: flex;
  flex-direction: column;
  align-items: center;
  justify-content: center;
  gap: 8px;
}
.spin-arrows .tri-up, .spin-arrows .tri-down { border-left-width: 3.5px; border-right-width: 3.5px; }
.label-size { display: flex; justify-content: center; align-items: center; position: relative; padding-right: 26px; }
.launch { flex: none; }
.launch-size { position: absolute; right: 6px; top: 8px; }
.collapse { flex: 1; display: flex; justify-content: center; padding-top: 112px; padding-right: 2px; }

/* workspace */
.workspace {
  height: 878px;
  flex: none;
  display: grid;
  grid-template-columns: 36px 1fr;
  grid-template-rows: 39px 1fr;
  background: #e6e6e6;
}
.ruler-corner { padding: 4px 0 0 3px; }
.corner-btn {
  width: 30px;
  height: 28px;
  background: #fff;
  border: 2px solid #dadada;
  display: flex;
  align-items: center;
  justify-content: center;
  padding-top: 2px;
}
.hruler-wrap { position: relative; padding: 5px 0 0 274px; }
.hruler {
  width: 1190px;
  height: 24px;
  display: flex;
  background: linear-gradient(90deg, #c6c6c6 168px, #fff 168px, #fff 1020px, #c6c6c6 1020px);
}
.hs {
  flex: none;
  width: 42px;
  display: flex;
  justify-content: center;
}
.hs-first { margin-left: -19px; }
.hs b {
  width: 22px;
  height: 24px;
  font: 400 13px/25px "Noto Sans", sans-serif;
  text-align: center;
  color: #555;
  background:
    linear-gradient(#666, #666) left center / 1px 8px no-repeat,
    linear-gradient(#666, #666) right center / 1px 8px no-repeat;
}
.hs-first b { background: linear-gradient(#666, #666) right center / 1px 8px no-repeat; }
.marker { position: absolute; }
.marker-left { left: 438px; top: 3px; }
.marker-right { left: 1288px; top: 20px; }

.vruler {
  margin-left: 5px;
  width: 25px;
  height: 839px;
  overflow: hidden;
  padding: 10px 0 0 5px;
  background: linear-gradient(#c6c6c6 200px, #fff 200px);
}
.vn {
  display: flex;
  align-items: center;
  justify-content: center;
  height: 18px;
  width: 20px;
  font: 400 13px/18px "Noto Sans", sans-serif;
  color: #555;
  transform: rotate(-90deg);
  white-space: nowrap;
}
.vt {
  height: 18px;
  width: 20px;
  background: linear-gradient(#666, #666) center / 8px 1px no-repeat;
}
.vt-none { background: none; }

.canvas { padding: 2px 0 0 275px; overflow: hidden; }
.page {
  position: relative;
  width: 1189px;
  height: 840px;
  background: #fff;
  border: 1px solid #c6c6c6;
  overflow: hidden;
}
.crop { position: absolute; }
.crop-tl { left: 133px; top: 160px; width: 36px; height: 37px; border-right: 1px solid #9a9a9a; border-bottom: 1px solid #9a9a9a; }
.crop-tr { left: 1001px; top: 196px; width: 55px; height: 1px; background: #9a9a9a; }
.retmark { position: absolute; left: 172px; top: 209px; font: 11px/16px "DejaVu Sans", sans-serif; color: #777; }
.shape { position: absolute; left: 100px; top: 149px; }

/* status */
.statusbar {
  height: 33px;
  flex: none;
  background: #f1f1f1;
  border-top: 1px solid #c6c6c6;
  display: flex;
  align-items: center;
  font-size: 17px;
  color: #444;
  white-space: nowrap;
  position: relative;
}
.statusbar svg { flex: none; }
.st-a { margin-left: 8px; width: 103px; }
.st-b { width: 74px; letter-spacing: .6px; word-spacing: 2px; }
.st-proof { margin-left: 0; }
.st-c { margin-left: 20px; letter-spacing: 1.2px; }
.st-right { margin-left: auto; display: flex; align-items: center; align-self: stretch; }
.st-read { margin-right: 13px; }
.st-view {
  width: 45px;
  align-self: stretch;
  background: #c6c6c6;
  display: flex;
  align-items: center;
  justify-content: center;
}
.st-web { margin-left: 13px; }
.z-minus { width: 11px; height: 3px; background: #777; margin-left: 18px; }
.z-track { width: 148px; height: 2px; background: #a6a6a6; margin-left: 6px; position: relative; }
.z-thumb { position: absolute; left: 70px; top: -8px; width: 8px; height: 17px; background: #6d6d6d; }
.z-plus {
  width: 11px;
  height: 11px;
  margin-left: 6px;
  background:
    linear-gradient(#777, #777) center / 11px 2px no-repeat,
    linear-gradient(#777, #777) center / 2px 11px no-repeat;
}
.z-pct { margin-left: 14px; width: 59px; font-size: 18px; }

/* fill menu */
.fillmenu {
  position: absolute;
  left: 550px;
  top: 132px;
  width: 242px;
  height: 396px;
  background: #fff;
  border: 1px solid #d0d0d0;
  box-shadow: 1px 1px 3px rgba(0, 0, 0, .25);
  font-size: 16.5px;
  color: #555;
}
.mhead {
  height: 30px;
  background: #e9e9e9;
  font-weight: 700;
  font-size: 16px;
  line-height: 31px;
  padding-left: 9px;
  color: #666;
}
.mhead2 { margin-top: 3px; height: 31px; }
.swatches {
  display: grid;
  grid-template-columns: repeat(10, 20px);
  gap: 4px;
  padding-left: 2.5px;
  padding-top: 2px;
}
.swatches i { height: 20px; border: 1px solid #e2e2e2; }
.sw-grad { padding-top: 5px; }
.sw-grad i { height: 100px; }
.t1 { background: #fff; } .t2 { background: #000; } .t3 { background: #e7e6e6; } .t4 { background: #44546a; } .t5 { background: #4472c4; }
.t6 { background: #ed7d31; } .t7 { background: #a5a5a5; } .t8 { background: #ffc000; } .t9 { background: #5b9bd5; } .t10 { background: #70ad47; }
.s1 { background: #c00000; } .s2 { background: #f00; } .s3 { background: #ffc000; } .s4 { background: #ff0; } .s5 { background: #92d050; }
.s6 { background: #00b050; } .s7 { background: #00b0f0; } .s8 { background: #1a6fb8; } .s9 { background: #002060; } .s10 { background: #7030a0; }
.g1 { background: linear-gradient(#f2f2f2 20%, #d9d9d9 20% 40%, #bfbfbf 40% 60%, #a6a6a6 60% 80%, #7f7f7f 80%); }
.g2 { background: linear-gradient(#7f7f7f 20%, #595959 20% 40%, #404040 40% 60%, #262626 60% 80%, #0d0d0d 80%); }
.g3 { background: linear-gradient(#d0cece 20%, #afabab 20% 40%, #767171 40% 60%, #3b3838 60% 80%, #181717 80%); }
.g4 { background: linear-gradient(#d6dce5 20%, #adb9ca 20% 40%, #8497b0 40% 60%, #333f50 60% 80%, #222a35 80%); }
.g5 { background: linear-gradient(#d9e2f3 20%, #b4c6e7 20% 40%, #8eaadb 40% 60%, #2f5496 60% 80%, #1f3864 80%); }
.g6 { background: linear-gradient(#fbe5d6 20%, #f7caac 20% 40%, #f4b183 40% 60%, #c55a11 60% 80%, #833c0b 80%); }
.g7 { background: linear-gradient(#ededed 20%, #dbdbdb 20% 40%, #c9c9c9 40% 60%, #7b7b7b 60% 80%, #525252 80%); }
.g8 { background: linear-gradient(#fff2cc 20%, #ffe599 20% 40%, #ffd966 40% 60%, #bf9000 60% 80%, #7f6000 80%); }
.g9 { background: linear-gradient(#deeaf6 20%, #bdd7ee 20% 40%, #9cc3e5 40% 60%, #2e75b5 60% 80%, #1f4e79 80%); }
.g10 { background: linear-gradient(#e2efd9 20%, #c5e0b3 20% 40%, #a8d08d 40% 60%, #538135 60% 80%, #375623 80%); }
.nofill {
  height: 34px;
  margin-top: 3px;
  display: flex;
  align-items: center;
  padding-left: 4px;
  border-bottom: 1px solid #ddd;
  white-space: nowrap;
}
.nofill-box { width: 24px; height: 24px; border: 1px solid #e2e2e2; flex: none; }
.nofill span { margin-left: 18px; line-height: 24px; margin-top: -4px; }
.mitem {
  height: 36px;
  display: flex;
  align-items: center;
  padding: 0 0 0 6px;
  white-space: nowrap;
  position: relative;
}
.mitem span { margin-top: -2px; letter-spacing: .3px; }
.mic { flex: none; margin-right: 14px; }
.mic20 { margin-right: 16px; }
.mitem-active { background: #c6c6c6; color: #333; }
.mitem .arrow-r {
  position: absolute;
  right: 13px;
  top: 13px;
  width: 0;
  height: 0;
  border-top: 5px solid transparent;
  border-bottom: 5px solid transparent;
  border-left: 6px solid #6d6d6d;
}

/* texture menu */
.texmenu {
  position: absolute;
  left: 792px;
  top: 293px;
  width: 556px;
  height: 842px;
  background: #fff;
  border: 1px solid #c6c6c6;
  box-shadow: 1px 1px 3px rgba(0, 0, 0, .25);
  font-size: 16.5px;
  color: #555;
}
.texgrid {
  display: grid;
  grid-template-columns: repeat(4, 120px);
  gap: 12px;
  padding: 7px 0 0 6px;
}
.tex { display: block; width: 120px; height: 120px; }
.tex-sel { box-shadow: 0 0 0 6px #c6c6c6; }
.texmore {
  margin-top: 6px;
  height: 38px;
  border-top: 1px solid #ddd;
  display: flex;
  align-items: center;
  padding-left: 7px;
  white-space: nowrap;
  gap: 15px;
}
.grip { display: flex; justify-content: center; gap: 5px; padding-right: 4px; margin-top: 2px; }
.grip i { width: 3px; height: 3px; background: #b5b5b5; }

/* red annotations */
.annot { position: absolute; left: 0; top: 0; pointer-events: none; }
.annot ellipse { fill: none; stroke: #ed1c24; stroke-width: 9; shape-rendering: crispEdges; }
```
